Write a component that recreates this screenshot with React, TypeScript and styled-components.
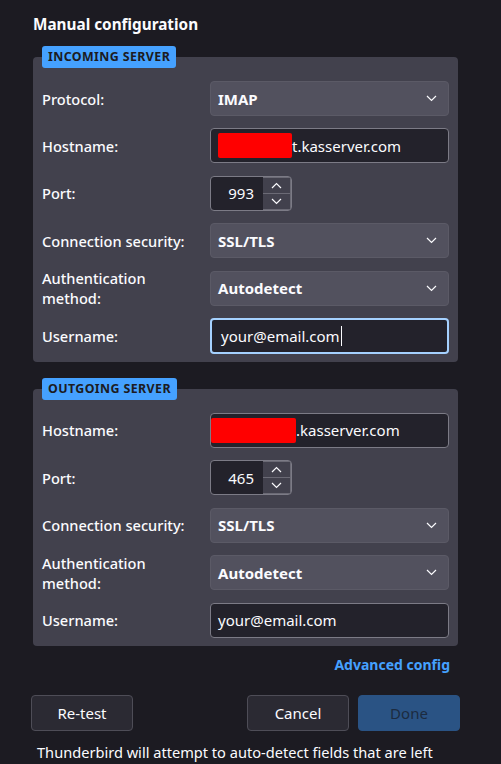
import React from 'react';
import styled, { createGlobalStyle } from 'styled-components';

const GlobalStyle = createGlobalStyle`
  html, body {
    margin: 0;
    padding: 0;
    background: #1c1b22;
  }
  body {
    font-family: 'Noto Sans', 'Open Sans', sans-serif;
    color: #fbfbfe;
    overflow: hidden;
  }
`;

const Page = styled.div`
  width: 501px;
  height: 764px;
  box-sizing: border-box;
  padding: 13px 43px 0 33px;
  display: flex;
  flex-direction: column;
`;

const Title = styled.h2`
  margin: 0 0 11px;
  font-size: 15.3px;
  line-height: 22px;
  font-weight: 700;
  color: #fbfbfe;
`;

const Panel = styled.fieldset`
  margin: 0 0 16px;
  padding: 13px 9px 8px;
  border: none;
  border-radius: 4px;
  background: #42414d;
  display: flex;
  flex-direction: column;
  gap: 12.4px;
`;

const Legend = styled.legend`
  padding: 0 6px;
  height: 22px;
  line-height: 22px;
  border-radius: 3px;
  background: #45a1ff;
  color: #1c1b22;
  font-size: 12.4px;
  font-weight: 700;
  letter-spacing: 0.4px;
`;

const Row = styled.div`
  display: grid;
  grid-template-columns: 168px 239px;
  align-items: center;
  min-height: 35px;
`;

const Label = styled.label`
  font-size: 14.6px;
  line-height: 20px;
  margin: -3px 0;
  font-weight: 500;
  color: #fbfbfe;
`;

const Select = styled.div`
  height: 35px;
  box-sizing: border-box;
  border: 1px solid #5b5a66;
  border-radius: 4px;
  background: #52515e;
  display: flex;
  align-items: center;
  justify-content: space-between;
  padding: 0 11px 0 7px;
  font-size: 15px;
  font-weight: 700;
`;

const TextBox = styled.div<{ $focused?: boolean; $flush?: boolean }>`
  height: ${(p) => (p.$focused ? '36px' : '35px')};
  box-sizing: border-box;
  border: ${(p) => (p.$focused ? '2px solid #a5d1ff' : '1px solid #7c7b86')};
  border-radius: 4px;
  background: #23222b;
  display: flex;
  align-items: center;
  padding: 0 ${(p) => (p.$focused ? '9px' : p.$flush ? '0' : '7px')};
  font-size: 15px;
  white-space: nowrap;
`;

const Redacted = styled.span<{ $width: number }>`
  display: inline-block;
  width: ${(p) => p.$width}px;
  height: 25px;
  background: #ff0000;
  border-radius: 2px;
`;

const Caret = styled.span`
  display: inline-block;
  width: 1px;
  height: 20px;
  background: #fbfbfe;
  margin-left: 1px;
`;

const PortBox = styled.div`
  width: 82px;
  height: 35px;
  box-sizing: border-box;
  border: 1px solid #7c7b86;
  border-radius: 4px;
  background: #23222b;
  display: flex;
  align-items: stretch;
`;

const PortValue = styled.div`
  flex: 1;
  display: flex;
  align-items: center;
  justify-content: flex-end;
  padding-right: 9px;
  font-size: 15px;
`;

const Spin = styled.div`
  width: 27px;
  display: flex;
  flex-direction: column;
  padding: 1px 1px 1px 0;
  gap: 1px;
  background: #6b6a75;
`;

const SpinButton = styled.div`
  flex: 1;
  background: #42414d;
  display: flex;
  align-items: center;
  justify-content: center;
`;

const LinkRow = styled.div`
  display: flex;
  justify-content: flex-end;
  padding-right: 8px;
  margin-top: -8px;
`;

const Link = styled.a`
  color: #45a1ff;
  font-size: 14px;
  font-weight: 700;
  line-height: 22px;
  text-decoration: none;
`;

const Buttons = styled.div`
  display: flex;
  align-items: center;
  margin: 19px -2px 0 -2px;
  gap: 9px;
`;

const Button = styled.button<{ $primary?: boolean }>`
  width: 102px;
  height: 36px;
  box-sizing: border-box;
  border-radius: 4px;
  border: 1px solid ${(p) => (p.$primary ? '#2a5384' : '#4e4d57')};
  background: ${(p) => (p.$primary ? '#2a5384' : '#2b2a33')};
  color: ${(p) => (p.$primary ? '#1c2b40' : '#fbfbfe')};
  font-family: inherit;
  font-size: 15px;
  padding: 0;
`;

const Spacer = styled.div`
  flex: 1;
`;

const Note = styled.p`
  margin: 12px 0 0 4px;
  font-size: 14.6px;
  line-height: 18px;
  color: #fbfbfe;
  white-space: nowrap;
`;

const Chevron = ({ up }: { up?: boolean }) => (
  <svg width="11" height="7" viewBox="0 0 11 7">
    <path
      d={up ? 'M1 6 L5.5 1.5 L10 6' : 'M1 1 L5.5 5.5 L10 1'}
      fill="none"
      stroke="#fbfbfe"
      strokeWidth="1.2"
    />
  </svg>
);

const SelectField = ({ value }: { value: string }) => (
  <Select>
    <span>{value}</span>
    <Chevron />
  </Select>
);

const PortField = ({ value }: { value: string }) => (
  <PortBox>
    <PortValue>{value}</PortValue>
    <Spin>
      <SpinButton>
        <Chevron up />
      </SpinButton>
      <SpinButton>
        <Chevron />
      </SpinButton>
    </Spin>
  </PortBox>
);

type ServerProps = {
  title: string;
  protocol?: string;
  redact: number;
  flush?: boolean;
  port: string;
  focused?: boolean;
};

const ServerPanel = ({ title, protocol, redact, flush, port, focused }: ServerProps) => (
  <Panel>
    <Legend>{title}</Legend>
    {protocol && (
      <Row>
        <Label>Protocol:</Label>
        <SelectField value={protocol} />
      </Row>
    )}
    <Row>
      <Label>Hostname:</Label>
      <TextBox $flush={flush}>
        <Redacted $width={redact} />
        {flush ? '' : 't'}.kasserver.com
      </TextBox>
    </Row>
    <Row>
      <Label>Port:</Label>
      <PortField value={port} />
    </Row>
    <Row>
      <Label>Connection security:</Label>
      <SelectField value="SSL/TLS" />
    </Row>
    <Row>
      <Label>
        Authentication
        <br />
        method:
      </Label>
      <SelectField value="Autodetect" />
    </Row>
    <Row>
      <Label>Username:</Label>
      <TextBox $focused={focused}>
        your@email.com
        {focused && <Caret />}
      </TextBox>
    </Row>
  </Panel>
);

export default function App() {
  return (
    <>
      <GlobalStyle />
      <Page>
        <Title>Manual configuration</Title>
        <ServerPanel title="INCOMING SERVER" protocol="IMAP" redact={74} port="993" focused />
        <ServerPanel title="OUTGOING SERVER" redact={85} flush port="465" />
        <LinkRow>
          <Link href="#">Advanced config</Link>
        </LinkRow>
        <Buttons>
          <Button>Re-test</Button>
          <Spacer />
          <Button>Cancel</Button>
          <Button $primary>Done</Button>
        </Buttons>
        <Note>Thunderbird will attempt to auto-detect fields that are left</Note>
      </Page>
    </>
  );
}
